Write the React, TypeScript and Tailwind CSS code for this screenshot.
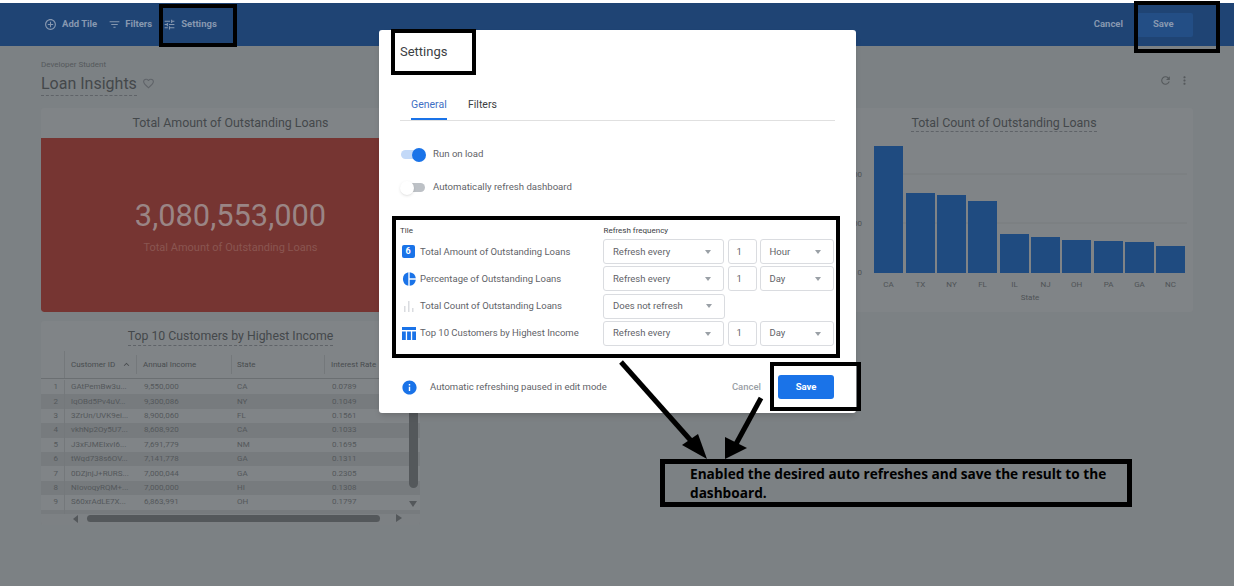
// App.tsx
import React from 'react';
import {
  MdOutlineAddCircleOutline,
  MdFilterList,
  MdTune,
  MdFavoriteBorder,
  MdRefresh,
  MdMoreVert,
  MdInfo,
  MdKeyboardArrowUp,
} from 'react-icons/md';

const customers = [
  ['1', 'GAtPemBw3u...', '9,550,000', 'CA', '0.0789'],
  ['2', 'lqOBd5Pv4uV...', '9,300,086', 'NY', '0.1049'],
  ['3', '3ZrUn/UVK9ei...', '8,900,060', 'FL', '0.1561'],
  ['4', 'vkhNp2Oy5U7...', '8,608,920', 'CA', '0.1033'],
  ['5', 'J3xFJMEIxvI6...', '7,691,779', 'NM', '0.1695'],
  ['6', 'tWqd738s6OV...', '7,141,778', 'GA', '0.1311'],
  ['7', '0DZjnjJ+RURS...', '7,000,044', 'GA', '0.2305'],
  ['8', 'NIovoqyRQM+...', '7,000,000', 'HI', '0.1308'],
  ['9', 'S60xrAdLE7X...', '6,863,991', 'OH', '0.1797'],
  ['10', 'Zy/46LkP...', '6,100,001', 'MD', '0.0849'],
];

const bars = [
  { state: 'CA', x: 59, top: 8 },
  { state: 'TX', x: 91, top: 55 },
  { state: 'NY', x: 122, top: 57 },
  { state: 'FL', x: 153, top: 63 },
  { state: 'IL', x: 185, top: 96 },
  { state: 'NJ', x: 216, top: 99 },
  { state: 'OH', x: 247, top: 102 },
  { state: 'PA', x: 279, top: 103 },
  { state: 'GA', x: 310, top: 104 },
  { state: 'NC', x: 341, top: 108 },
];

function ScoreIcon() {
  return <div className="w-[13px] h-[13px] rounded-[2px] bg-[#1a73e8] text-white text-[9px] font-bold leading-[13px] text-center">6</div>;
}

function PieIcon() {
  return (
    <svg width="14" height="14" viewBox="0 0 14 14">
      <path d="M6.3 0.2 A7 7 0 0 0 6.3 13.8 Z" fill="#1a73e8" />
      <path d="M7.7 0.2 A7 7 0 0 1 13.8 6.3 L7.7 6.3 Z" fill="#1a73e8" />
      <path d="M7.7 7.7 L13.8 7.7 A7 7 0 0 1 7.7 13.8 Z" fill="#1a73e8" />
    </svg>
  );
}

function BarsIcon() {
  return (
    <svg width="14" height="12" viewBox="0 0 14 12">
      <rect x="2" y="6" width="1.5" height="6" fill="#dadce0" />
      <rect x="6" y="1" width="1.5" height="11" fill="#dadce0" />
      <rect x="10" y="8" width="1.5" height="4" fill="#dadce0" />
    </svg>
  );
}

function TableIcon() {
  return (
    <svg width="14" height="13" viewBox="0 0 14 13">
      <rect x="0" y="0" width="14" height="3" fill="#1a73e8" />
      <rect x="0" y="4.5" width="3.8" height="8.5" fill="#1a73e8" />
      <rect x="5.1" y="4.5" width="3.8" height="8.5" fill="#1a73e8" />
      <rect x="10.2" y="4.5" width="3.8" height="8.5" fill="#1a73e8" />
    </svg>
  );
}

function Select({ label, width }: { label: string; width: string }) {
  return (
    <div className={`${width} h-[25px] border border-[#dadce0] rounded-[3px] flex items-center justify-between pl-[9px] pr-[12px] text-[9.5px] text-[#5f6368]`}>
      <span>{label}</span>
      <span className="w-0 h-0 border-x-[3.5px] border-x-transparent border-t-[4px] border-t-[#9aa0a6]" />
    </div>
  );
}

function RefreshRow({ icon, title, mode, unit }: { icon: React.ReactNode; title: string; mode: string; unit?: string }) {
  return (
    <div className="h-[27.3px] flex items-center">
      <div className="w-[20px] pl-[1.5px] flex justify-start shrink-0">{icon}</div>
      <div className="w-[183px] shrink-0 text-[9.5px] text-[#5f6368] whitespace-nowrap">{title}</div>
      <Select label={mode} width={unit ? 'w-[121px]' : 'w-[122px]'} />
      {unit && (
        <>
          <div className="w-[29px] h-[25px] ml-[3.5px] border border-[#dadce0] rounded-[3px] flex items-center pl-[8px] text-[9.5px] text-[#5f6368]">1</div>
          <div className="ml-[3px]">
            <Select label={unit} width="w-[74px]" />
          </div>
        </>
      )}
    </div>
  );
}

function Dashboard() {
  return (
    <div className="h-[583px] bg-[#7c8184] overflow-hidden">
      <header className="h-[43px] bg-[#1f4474] flex items-center pl-[44px] pr-[41px] text-[9.5px] font-bold text-[#8798b0]">
        <MdOutlineAddCircleOutline className="w-[13px] h-[13px] mr-[5px]" />
        <span>Add Tile</span>
        <MdFilterList className="w-[13px] h-[13px] ml-[11px] mr-[4px]" />
        <span>Filters</span>
        <MdTune className="w-[13px] h-[13px] ml-[11px] mr-[5px]" />
        <span>Settings</span>
        <span className="ml-auto mr-[14px]">Cancel</span>
        <div className="w-[56px] h-[24px] bg-[#234e85] rounded-[2px] flex items-center pl-[16px]">Save</div>
      </header>

      <div className="px-[41px]">
        <div className="h-[62px] pt-[13px] flex">
          <div>
            <div className="text-[8px] leading-[12px] text-[#55595c]">Developer Student</div>
            <div className="flex items-center">
              <div className="text-[16px] leading-[22px] mt-[2px] text-[#44484b] border-b border-dashed border-[#5f6368]">Loan Insights</div>
              <MdFavoriteBorder className="w-[13px] h-[13px] ml-[5px] text-[#5f6368]" />
            </div>
          </div>
          <div className="ml-auto pr-[2px] pt-[12px] flex items-center h-[30px] gap-[6px] text-[#55595c]">
            <MdRefresh className="w-[13px] h-[13px]" />
            <MdMoreVert className="w-[13px] h-[13px]" />
          </div>
        </div>

        <div className="grid grid-cols-[379px_379px_378px] gap-x-[8px] gap-y-[9px]">
          <section className="h-[204px] bg-[#808487] rounded-[3px] overflow-hidden flex flex-col">
            <h2 className="h-[30px] flex items-center justify-center text-[12.4px] text-[#44484b]">Total Amount of Outstanding Loans</h2>
            <div className="flex-1 bg-[#763532] rounded-b-[3px] flex flex-col items-center justify-center pt-[3px]">
              <div className="text-[30.8px] leading-[36px] text-[#9a8585]">3,080,553,000</div>
              <div className="text-[11px] leading-[14px] mt-[7px] text-[#8a5551]">Total Amount of Outstanding Loans</div>
            </div>
          </section>

          <section className="h-[204px] bg-[#808487] rounded-[3px]" />

          <section className="h-[204px] bg-[#808487] rounded-[3px] overflow-hidden">
            <div className="h-[30px] flex items-center justify-center">
              <h2 className="text-[12.4px] leading-[17px] text-[#44484b] border-b border-dashed border-[#5f6368]">Total Count of Outstanding Loans</h2>
            </div>
            <svg width="378" height="174" className="font-['Roboto',sans-serif]">
              <line x1="59" y1="36" x2="372" y2="36" stroke="#787c7f" />
              <line x1="59" y1="85" x2="372" y2="85" stroke="#787c7f" />
              <text x="47" y="39" fontSize="8" textAnchor="end" fill="#4f5356">1,000</text>
              <text x="47" y="88" fontSize="8" textAnchor="end" fill="#4f5356">500</text>
              <text x="47" y="137" fontSize="8" textAnchor="end" fill="#4f5356">0</text>
              {bars.map(b => (
                <g key={b.state}>
                  <rect x={b.x} y={b.top} width="29" height={135 - b.top} fill="#1f4b80" />
                  <text x={b.x + 14.5} y="149" fontSize="8" textAnchor="middle" fill="#4f5356">{b.state}</text>
                </g>
              ))}
              <text x="215" y="162" fontSize="8" textAnchor="middle" fill="#4f5356">State</text>
            </svg>
          </section>

          <section className="relative h-[204px] bg-[#808487] rounded-[3px] overflow-hidden">
            <div className="h-[30px] pt-[7px] flex items-start justify-center">
              <h2 className="text-[12.3px] leading-[17px] text-[#44484b] border-b border-dashed border-[#5f6368]">Top 10 Customers by Highest Income</h2>
            </div>
            <div className="grid grid-cols-[24px_72px_95px_93px_1fr] h-[28px] items-center border-b border-[#6b6f72] text-[8px] text-[#484c4f]">
              <div className="h-full border-r border-[#74787b]" />
              <div className="pl-[6px] flex items-center h-[19px] border-r border-[#74787b]">
                Customer ID
                <MdKeyboardArrowUp className="w-[11px] h-[11px] ml-[6px]" />
              </div>
              <div className="pl-[6px] h-[19px] flex items-center border-r border-[#74787b]">Annual Income</div>
              <div className="pl-[5px] h-[19px] flex items-center border-r border-[#74787b]">State</div>
              <div className="pl-[6px]">Interest Rate</div>
            </div>
            <div className="pt-[1px]">
              {customers.map((row, i) => (
                <div key={row[0]} className={`grid grid-cols-[24px_72px_95px_93px_1fr] h-[14.4px] items-center text-[8px] text-[#54585b] ${i % 2 === 1 ? 'bg-[#777b7e]' : ''}`}>
                  <div className="h-full flex items-center justify-end pr-[6px] border-r border-[#74787b]">{row[0]}</div>
                  <div className="pl-[6px] whitespace-nowrap overflow-hidden">{row[1]}</div>
                  <div className="pl-[7px]">{row[2]}</div>
                  <div className="pl-[5px]">{row[3]}</div>
                  <div className="pl-[7px]">{row[4]}</div>
                </div>
              ))}
            </div>
            {/* scrollbars sit over the rows */}
            <div className="absolute left-0 right-0 bottom-0 h-[11px] bg-[#7d8184]" />
            <div className="absolute left-[46px] top-[194px] w-[293px] h-[7px] rounded-full bg-[#54585b]" />
            <div className="absolute left-[32px] top-[194px] w-0 h-0 border-y-[4px] border-y-transparent border-r-[5px] border-r-[#54585b]" />
            <div className="absolute left-[355px] top-[193px] w-0 h-0 border-y-[4px] border-y-transparent border-l-[6px] border-l-[#54585b]" />
            <div className="absolute left-[368px] top-[60px] w-[9px] h-[107px] rounded-full bg-[#54585b]" />
            <div className="absolute left-[368px] top-[180px] w-0 h-0 border-x-[4.5px] border-x-transparent border-t-[6px] border-t-[#54585b]" />
          </section>
        </div>
      </div>
    </div>
  );
}

function SettingsModal() {
  return (
    <div className="absolute left-[379px] top-[30px] w-[477px] h-[383px] bg-white rounded-[3px] px-[21px] shadow-md">
      <h1 className="h-[43px] flex items-center text-[13px] text-[#3c4043]">Settings</h1>

      <div className="h-[48px] border-b border-[#e0e0e0] flex items-end text-[10.5px]">
        <div className="ml-[11px] w-[36px] h-[31px] pt-[8px] text-[#3f6fc4] border-b-2 border-[#1a73e8]">General</div>
        <div className="ml-[21px] h-[31px] pt-[8px] text-[#3c4043]">Filters</div>
      </div>

      <div className="h-[33px] mt-[17px] flex items-center">
        <div className="relative w-[24px] h-[9px] ml-[1px] rounded-full bg-[#c3d9f8]">
          <span className="absolute right-[-1px] top-[-2.5px] w-[14px] h-[14px] rounded-full bg-[#1a73e8]" />
        </div>
        <span className="ml-[8px] text-[9.6px] text-[#5f6368]">Run on load</span>
      </div>
      <div className="h-[33px] flex items-center">
        <div className="relative w-[24px] h-[9px] ml-[1px] rounded-full bg-[#bdc1c6]">
          <span className="absolute left-[-1px] top-[-2.5px] w-[14px] h-[14px] rounded-full bg-white shadow" />
        </div>
        <span className="ml-[8px] text-[9.6px] text-[#5f6368]">Automatically refresh dashboard</span>
      </div>

      <div className="mt-[20px] flex h-[14px] items-center text-[8px] text-[#3c4043]">
        <div className="w-[203.5px]">Tile</div>
        <div>Refresh frequency</div>
      </div>
      <RefreshRow icon={<ScoreIcon />} title="Total Amount of Outstanding Loans" mode="Refresh every" unit="Hour" />
      <RefreshRow icon={<PieIcon />} title="Percentage of Outstanding Loans" mode="Refresh every" unit="Day" />
      <RefreshRow icon={<BarsIcon />} title="Total Count of Outstanding Loans" mode="Does not refresh" />
      <RefreshRow icon={<TableIcon />} title="Top 10 Customers by Highest Income" mode="Refresh every" unit="Day" />

      <div className="mt-[25px] h-[30px] flex items-center">
        <MdInfo className="w-[17px] h-[17px] ml-[1px] text-[#1a73e8]" />
        <span className="ml-[12px] text-[9.5px] text-[#5f6368]">Automatic refreshing paused in edit mode</span>
        <span className="ml-auto text-[9.5px] font-medium text-[#9aa0a6]">Cancel</span>
        <button className="ml-[17px] mr-[1px] w-[56px] h-[24px] rounded-[3px] bg-[#1a73e8] text-white text-[9.5px] font-bold">Save</button>
      </div>
    </div>
  );
}

function Annotations() {
  return (
    <>
      <div className="absolute left-[159px] top-[4px] w-[78px] h-[43px] border-[4px] border-black" />
      <div className="absolute left-[1134px] top-[1px] w-[86px] h-[52px] border-[4px] border-black" />
      <div className="absolute left-[391px] top-[29px] w-[85px] h-[46px] border-[4px] border-black" />
      <div className="absolute left-[392px] top-[216px] w-[448px] h-[142px] border-[4px] border-black" />
      <div className="absolute left-[770px] top-[362px] w-[91px] h-[49px] border-[4px] border-black" />
      <svg className="absolute left-0 top-0" width="1234" height="586">
        <line x1="621" y1="362" x2="693" y2="443" stroke="black" strokeWidth="5" />
        <polygon points="707,459 682,445 698,434" fill="black" />
        <line x1="761" y1="398" x2="736" y2="444" stroke="black" strokeWidth="5" />
        <polygon points="725,459 725,437 747,448" fill="black" />
      </svg>
      <div className="absolute left-[660px] top-[459px] w-[472px] h-[48px] border-[5px] border-black pl-[25px] text-[13.65px] leading-[19px] font-bold text-black font-['Open_Sans',sans-serif]">
        Enabled the desired auto refreshes and save the result to the dashboard.
      </div>
    </>
  );
}

export default function App() {
  return (
    <div className="relative w-[1234px] h-[586px] overflow-hidden bg-white pt-[3px] font-['Roboto',sans-serif]">
      <Dashboard />
      <SettingsModal />
      <Annotations />
    </div>
  );
}
